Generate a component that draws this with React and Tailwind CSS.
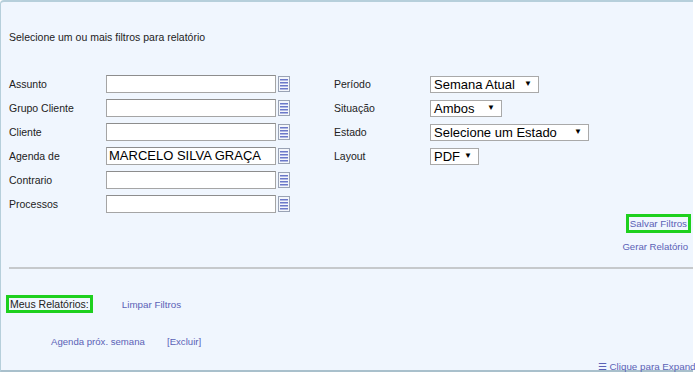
import React from "react";

const link = "text-[#5b62b6]";

function ListIcon() {
  return (
    <svg width="12" height="16" viewBox="0 0 12 16" className="shrink-0">
      <rect x="0.5" y="0.5" width="11" height="15" fill="#f4f6fb" stroke="#9aa3b5" />
      <rect x="2" y="3" width="8" height="1.5" fill="#6b78c9" />
      <rect x="2" y="6" width="8" height="1.5" fill="#6b78c9" />
      <rect x="2" y="9" width="8" height="1.5" fill="#6b78c9" />
      <rect x="2" y="12" width="8" height="1.5" fill="#6b78c9" />
    </svg>
  );
}

function TextRow({ label, value }) {
  return (
    <div className="flex h-6 items-center">
      <span className="w-[97px] text-[10.5px] leading-[13px] text-[#222]">{label}</span>
      <div className="flex items-center gap-[2px]">
        <div className="h-[18px] w-[170px] border border-[#a5a5a5] border-t-[#8d8d8d] bg-white px-[2px] text-[13px] leading-[16px] text-black">
          {value}
        </div>
        <ListIcon />
      </div>
    </div>
  );
}

function SelectRow({ label, value, width }) {
  return (
    <div className="flex h-6 items-center">
      <span className="w-[96px] text-[10.5px] leading-[13px] text-[#222]">{label}</span>
      <div
        className={`flex h-[17px] items-center justify-between border border-[#a9a9a9] bg-white pl-[3px] pr-[6px] text-[13px] text-black ${width}`}
      >
        <span className="leading-none">{value}</span>
        <span className="text-[8px] leading-none">▼</span>
      </div>
    </div>
  );
}

export default function App() {
  return (
    <div className="h-[374px] w-[695px] overflow-hidden bg-white font-['Liberation_Sans',Arial,sans-serif]">
      <div className="flex h-[372px] w-[693px] flex-col rounded-tl-[4px] border-t-2 border-b-2 border-l border-[#b6cfdb] border-b-[#a9c0cc] bg-[#f0f6fe]">
        <div className="shrink-0 pl-2 pt-[29px] text-[10.5px] leading-[13px] text-[#222]">
          Selecione um ou mais filtros para relatório
        </div>

        <div className="mt-[28px] flex shrink-0 pl-2">
          <div className="flex w-[325px] flex-col">
            <TextRow label="Assunto" />
            <TextRow label="Grupo Cliente" />
            <TextRow label="Cliente" />
            <TextRow label="Agenda de" value="MARCELO SILVA GRAÇA" />
            <TextRow label="Contrario" />
            <TextRow label="Processos" />
          </div>
          <div className="flex flex-col">
            <SelectRow label="Período" value="Semana Atual" width="w-[109px]" />
            <SelectRow label="Situação" value="Ambos" width="w-[72px]" />
            <SelectRow label="Estado" value="Selecione um Estado" width="w-[159px]" />
            <SelectRow label="Layout" value="PDF" width="w-[49px]" />
          </div>
        </div>

        <div className="mt-[-2px] flex shrink-0 flex-col items-end pr-[2px]">
          <div className={`border-[3px] border-[#1ed01e] px-[1px] text-[9.8px] leading-[13px] ${link}`}>
            Salvar Filtros
          </div>
          <div className={`mt-[7px] pr-[3px] text-[9.6px] leading-[13px] ${link}`}>Gerar Relatório</div>
        </div>

        <div className="ml-2 mt-[14px] h-[2px] shrink-0 bg-[#c6c9cc]" />

        <div className="mt-[26px] flex shrink-0 items-center pl-[5px]">
          <div className="border-[3px] border-[#1ed01e] px-[1px] text-[10.5px] leading-[12px] text-[#222]">Meus Relatórios:</div>
          <div className={`ml-[29px] text-[9.8px] leading-[13px] ${link}`}>Limpar Filtros</div>
        </div>

        <div className="mt-[22px] flex shrink-0 pl-[50px] text-[9.6px] leading-[13px]">
          <span className={`w-[116px] ${link}`}>Agenda próx. semana</span>
          <span className={link}>[Excluir]</span>
        </div>

        <div className="mt-auto mb-[-2px] flex shrink-0 justify-end whitespace-nowrap">
          <span className={`text-[9.8px] leading-[11px] ${link}`} style={{ marginRight: -8 }}>
            ☰ Clique para Expandir
          </span>
        </div>
      </div>
    </div>
  );
}
